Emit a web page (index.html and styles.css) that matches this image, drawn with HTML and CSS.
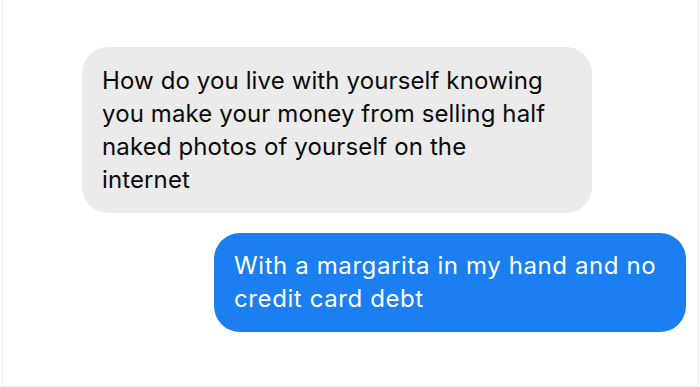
FILE: index.html
```html
<!DOCTYPE html>
<html lang="en">
<head>
  <meta charset="UTF-8" />
  <title>Messages</title>
  <link rel="stylesheet" href="styles.css">
</head>
<body>
  <div class="thread">
    <div class="bubble received">How do you live with yourself knowing you make your money from selling half naked photos of yourself on the internet</div>
    <div class="bubble sent">With a margarita in my hand and no credit card debt</div>
  </div>
</body>
</html>
```

FILE: styles.css
```css
* {
  box-sizing: border-box;
}
body {
  margin: 0;
  width: 700px;
  height: 387px;
  background: #fff;
  font-family: Inter, 'Liberation Sans', sans-serif;
  overflow: hidden;
}
.thread {
  height: 387px;
  border-left: 1px solid #ececec;
  border-right: 1px solid #ececec;
  border-bottom: 1px solid #ececec;
  margin-left: 2px;
  margin-right: 1px;
  padding-top: 47px;
  display: flex;
  flex-direction: column;
}
.bubble {
  font-size: 24px;
  line-height: 33px;
  border-radius: 26px;
  padding: 16px 20px 17px;
}
.received {
  margin-left: 79px;
  width: 510px;
  padding: 17px 38px 17px 20px;
  background: #ebebeb;
  color: #0a0a0a;
  letter-spacing: 0.12px;
}
.sent {
  margin-top: 20px;
  margin-left: 211px;
  width: 472px;
  background: #1b7ff2;
  color: #fff;
  letter-spacing: 0.6px;
}
```
